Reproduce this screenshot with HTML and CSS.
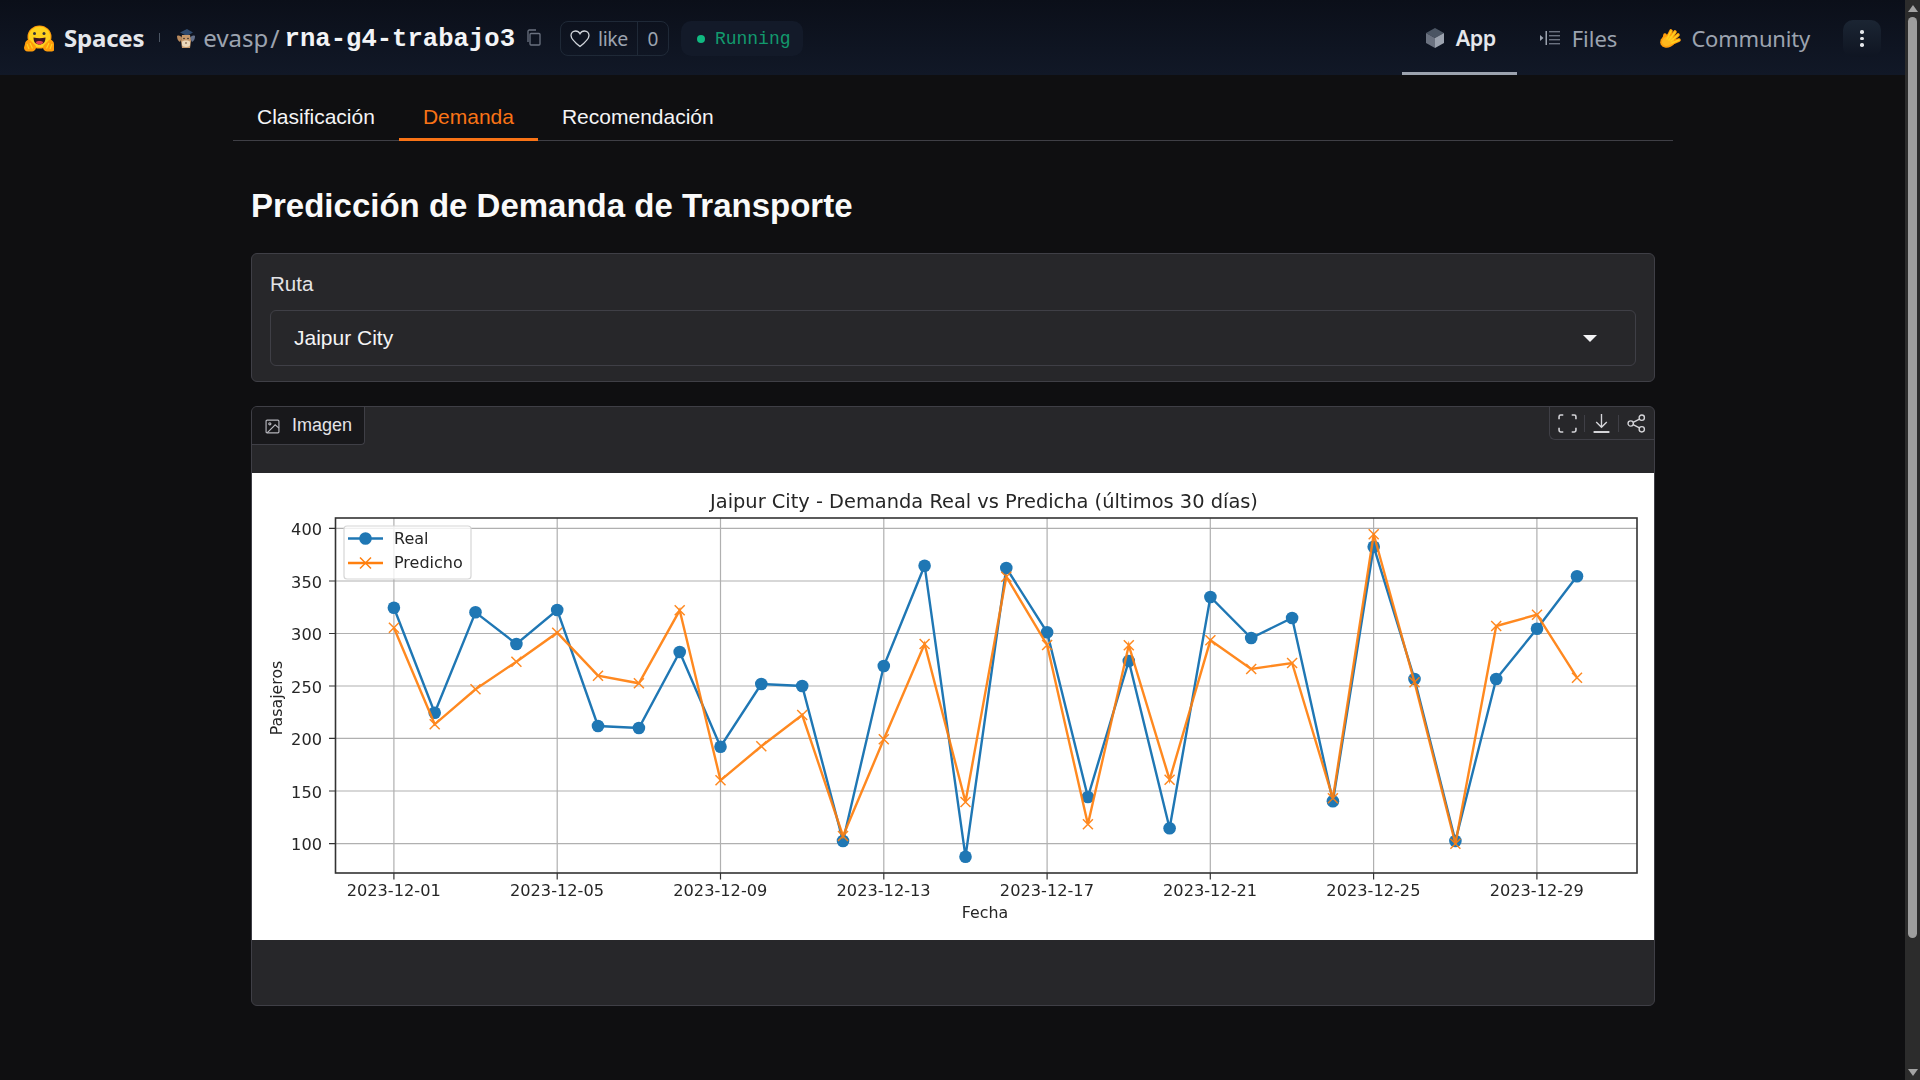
FILE: index.html
```html
<!DOCTYPE html>
<html lang="es">
<head>
    <meta charset="UTF-8">
    <title>rna-g4-trabajo3</title>
    <link rel="stylesheet" href="styles.css">
</head>
<body>
    <div class="page">
        <div class="main">
            <header class="hub-header">
                <svg class="hf-logo" viewBox="0 0 30 27">
                    <ellipse cx="15.500" cy="12" rx="12" ry="11.500" fill="#ff9d0b"/>
                    <ellipse cx="15.500" cy="12" rx="10.800" ry="10.500" fill="#ffd21e"/>
                    <circle cx="10.500" cy="8.500" r="1.500" fill="#32343d"/>
                    <circle cx="20" cy="8.500" r="1.500" fill="#32343d"/>
                    <path d="M9.500 12.500c4 1 8 1 12 0 0 5-2.500 7-6 7s-6-2-6-7z" fill="#3a1420"/>
                    <path d="M11.500 17c2-1.500 6-1.500 8 0-1 1.800-2.500 2.500-4 2.500s-3-.7-4-2.500z" fill="#e8434f"/>
                    <path d="M1 19c0-3 3-5 5-4l5 5c2 2 1 6-3 6.500H4c-3 0-4-2-4-4z" fill="#ff9d0b"/>
                    <path d="M30 19c0-3-3-5-5-4l-5 5c-2 2-1 6 3 6.500h4c3 0 4-2 4-4z" fill="#ff9d0b"/>
                    <path d="M3 19l2 5M6 18l2.500 5.500M28 19l-2 5M25 18l-2.500 5.500" stroke="#ffd21e" stroke-width="1.200"/>
                </svg>
                <span class="spaces-name">Spaces</span>
                <span class="divider"></span>
                <svg class="avatar" viewBox="0 0 20 20">
                    <path d="M4 4.500L11 1l6 3.500L11 8z" fill="#2f4a6d"/>
                    <path d="M1 8c2-1 4 0 5 2L4 14C2 13 1 11 1 8z" fill="#b98a5e"/>
                    <path d="M19 8c-2-1-4 0-5 2l2 4c2-1 3-3 3-6z" fill="#64708a"/>
                    <path d="M6 7h8l1 6-1 7H6l-1-7z" fill="#c79a6c"/>
                    <path d="M6 14c0-2 8-2 8 0v3c0 2.500-8 2.500-8 0z" fill="#ecd8bb"/>
                    <circle cx="8" cy="10.500" r=".8" fill="#2a2a2a"/>
                    <circle cx="12" cy="10.500" r=".8" fill="#2a2a2a"/>
                    <path d="M9 15h2" stroke="#6a4a33" stroke-width="1"/>
                </svg>
                <span class="owner">evasp</span>
                <span class="slash">/</span>
                <span class="repo-name">rna-g4-trabajo3</span>
                <svg class="copy-icon" viewBox="0 0 17 17" fill="none" stroke="#6b7280" stroke-width="1.300">
                    <rect x="5" y="4.500" width="10" height="11.500" rx="1"/>
                    <path d="M3 13V2.500C3 1.500 3.500 1 4.500 1H11"/>
                </svg>
                <div class="like-box">
                    <span class="like-btn">
                        <svg class="heart" viewBox="0 0 20 18" fill="none" stroke="#d1d5db" stroke-width="1.300">
                            <path d="M10 16.500C3 11 1 8.500 1 5.500 1 3 3 1 5.500 1 7.500 1 9 2 10 3.800 11 2 12.500 1 14.500 1 17 1 19 3 19 5.500c0 3-2 5.500-9 11z"/>
                        </svg>
                        like
                    </span>
                    <span class="like-count">0</span>
                </div>
                <div class="status-pill">
                    <span class="status-dot"></span>
                    Running
                </div>

                <nav class="hub-nav">
                    <a class="hub-tab active">
                        <svg class="tab-icon" viewBox="0 0 18 20">
                            <path d="M9 0l9 5-9 5-9-5z" fill="#4b5563"/>
                            <path d="M0 5l9 5v10l-9-5z" fill="#6b7280"/>
                            <path d="M18 5l-9 5v10l9-5z" fill="#9ca3af"/>
                        </svg>
                        App
                    </a>
                    <a class="hub-tab files-tab">
                        <svg class="files-icon" viewBox="0 0 20 14" fill="#6b7280">
                            <path d="M0 4l3.500 3L0 10z" fill="#9ca3af"/>
                            <rect x="5.500" y="0" width="1.500" height="14" fill="#9ca3af"/>
                            <rect x="9" y="0" width="11" height="1.400"/>
                            <rect x="9" y="4" width="11" height="1.400"/>
                            <rect x="9" y="8" width="11" height="1.400"/>
                            <rect x="9" y="12" width="11" height="1.400"/>
                        </svg>
                        Files
                    </a>
                    <a class="hub-tab community-tab">
                        <svg class="clap-icon" viewBox="0 0 23 20">
                            <g stroke="#ff9d0b" stroke-width="3.600" stroke-linecap="round" fill="none">
                                <path d="M8 11l4-8M10 12l6-8M12 13l7-6M13 15l7-3M5 12l1-5"/>
                            </g>
                            <ellipse cx="9" cy="13" rx="8" ry="6.300" fill="#ff9d0b" transform="rotate(-25 9 13)"/>
                            <ellipse cx="9" cy="13" rx="6.300" ry="4.800" fill="#ffb81e" transform="rotate(-25 9 13)"/>
                            <g stroke="#ffd21e" stroke-width="1.600" stroke-linecap="round" fill="none">
                                <path d="M8 11l4-8M10 12l6-8M12 13l7-6M13 15l7-3"/>
                            </g>
                        </svg>
                        Community
                    </a>
                    <span class="menu-btn">
                        <i></i><i></i><i></i>
                    </span>
                </nav>
            </header>

            <div class="app-wrap">
                <div class="tabs">
                    <button class="tab">Clasificación</button>
                    <button class="tab selected">Demanda</button>
                    <button class="tab">Recomendación</button>
                </div>

                <div class="tab-content">
                    <h1 class="page-title">Predicción de Demanda de Transporte</h1>

                    <div class="block dropdown-block">
                        <span class="field-label">Ruta</span>
                        <div class="select-box">
                            <span>Jaipur City</span>
                            <span class="caret"></span>
                        </div>
                    </div>

                    <div class="block image-block">
                        <div class="image-top">
                            <div class="image-label">
                                <svg class="image-icon" viewBox="0 0 14 14" fill="none" stroke="#b4b4bb" stroke-width="1.100">
                                    <rect x="1" y="1" width="12" height="12" rx="1"/>
                                    <circle cx="4.500" cy="4.500" r="1"/>
                                    <path d="M13 8.500L9.500 5.500 2 13"/>
                                </svg>
                                Imagen
                            </div>
                            <div class="image-tools">
                                <svg class="tool" viewBox="0 0 18 18" fill="none" stroke="#d4d4d8" stroke-width="1.500">
                                    <path d="M1 5V2.500C1 1.500 1.500 1 2.500 1H5M13 1h2.500c1 0 1.500.5 1.500 1.500V5M17 13v2.500c0 1-.5 1.500-1.500 1.500H13M5 17H2.500C1.500 17 1 16.500 1 15.500V13"/>
                                </svg>
                                <span class="tool-sep"></span>
                                <svg class="tool" viewBox="0 0 18 18" fill="none" stroke="#d4d4d8" stroke-width="1.300">
                                    <path d="M9 0v12M4 7.500l5 5 5-5"/>
                                    <path d="M1.500 17h15" stroke-width="1.800"/>
                                </svg>
                                <span class="tool-sep"></span>
                                <svg class="tool share" viewBox="0 0 18 18" fill="none" stroke="#d4d4d8" stroke-width="1.300">
                                    <circle cx="3.500" cy="9" r="2.500"/>
                                    <circle cx="14" cy="3.500" r="2.500"/>
                                    <circle cx="14" cy="14.500" r="2.500"/>
                                    <path d="M5.800 8l6-3.200M5.800 10l6 3.200"/>
                                </svg>
                            </div>
                        </div>

                        <svg class="chart" viewBox="252 473 1402 467">
                            <defs>
                                <marker id="dot" markerUnits="userSpaceOnUse" markerWidth="14" markerHeight="14" refX="7" refY="7">
                                    <circle cx="7" cy="7" r="6.300" fill="#1f77b4"/>
                                </marker>
                                <marker id="cross" markerUnits="userSpaceOnUse" markerWidth="14" markerHeight="14" refX="7" refY="7">
                                    <path d="M2 2l10 10M12 2L2 12" stroke="#ff7f0e" stroke-width="1.500" fill="none"/>
                                </marker>
                            </defs>

                            <g class="grid">
                                <path d="M393.900 518V873M557.200 518V873M720.500 518V873M883.800 518V873M1047.100 518V873M1210.300 518V873M1373.600 518V873M1536.900 518V873"/>
                                <path d="M336 528.300H1637M336 581H1637M336 633.500H1637M336 686H1637M336 738.300H1637M336 791H1637M336 843.700H1637"/>
                            </g>

                            <polyline class="series-real" points="393.900,607.700 434.700,712.700 475.500,612.300 516.400,644 557.200,610 598,726 638.900,728 679.700,652 720.500,746.700 761.300,684 802.200,686 843,841 883.800,666 924.600,565.700 965.500,856.700 1006.300,568 1047.100,632.300 1087.900,797 1128.800,661 1169.600,828.300 1210.400,597 1251.200,638 1292.100,618 1332.900,801.300 1373.700,546.700 1414.500,679 1455.400,841 1496.200,679 1537,628.700 1577,576.300"/>
                            <polyline class="series-pred" points="393.900,627.700 434.700,724.300 475.500,689.300 516.400,661.700 557.200,632.700 598,675.700 638.900,683.300 679.700,610.300 720.500,780.300 761.300,746.300 802.200,715 843,836 883.800,739.300 924.600,644 965.500,802 1006.300,576.700 1047.100,645 1087.900,824.300 1128.800,645.300 1169.600,779.700 1210.400,640.300 1251.200,669 1292.100,663 1332.900,798.300 1373.700,534.300 1414.500,682.300 1455.400,843.700 1496.200,626 1537,614.700 1577,677.700"/>

                            <rect class="axes" x="335.500" y="518" width="1301.500" height="355"/>
                            <path class="ticks" d="M329 528.300h6.500M329 581h6.500M329 633.500h6.500M329 686h6.500M329 738.300h6.500M329 791h6.500M329 843.700h6.500M393.900 873v6.500M557.200 873v6.500M720.500 873v6.500M883.800 873v6.500M1047.100 873v6.500M1210.300 873v6.500M1373.600 873v6.500M1536.900 873v6.500"/>

                            <text class="chart-title" x="984" y="508">Jaipur City - Demanda Real vs Predicha (últimos 30 días)</text>

                            <g class="y-labels">
                                <text x="322" y="535">400</text>
                                <text x="322" y="588">350</text>
                                <text x="322" y="640">300</text>
                                <text x="322" y="693">250</text>
                                <text x="322" y="745">200</text>
                                <text x="322" y="798">150</text>
                                <text x="322" y="850">100</text>
                            </g>
                            <g class="x-labels">
                                <text x="393.700" y="896">2023-12-01</text>
                                <text x="557" y="896">2023-12-05</text>
                                <text x="720.300" y="896">2023-12-09</text>
                                <text x="883.600" y="896">2023-12-13</text>
                                <text x="1046.900" y="896">2023-12-17</text>
                                <text x="1210.100" y="896">2023-12-21</text>
                                <text x="1373.400" y="896">2023-12-25</text>
                                <text x="1536.700" y="896">2023-12-29</text>
                            </g>
                            <text class="axis-label" x="985" y="918">Fecha</text>
                            <text class="axis-label" transform="translate(282 698) rotate(-90)">Pasajeros</text>

                            <rect class="legend" x="344" y="526" width="127" height="53" rx="3"/>
                            <path class="legend-real" d="M348 538.500h35"/>
                            <circle cx="365.500" cy="538.500" r="6.300" fill="#1f77b4"/>
                            <path class="legend-pred" d="M348 563h35"/>
                            <path class="legend-pred thin" d="M360 557.500l11 11M371 557.500l-11 11"/>
                            <text class="legend-text" x="394" y="544">Real</text>
                            <text class="legend-text" x="394" y="568">Predicho</text>
                        </svg>
                        <div class="image-bottom"></div>
                    </div>
                </div>
            </div>
        </div>

        <!-- barra de rolagem desenhada -->
        <div class="scrollbar">
            <span class="arrow-up"></span>
            <span class="thumb"></span>
            <span class="arrow-down"></span>
        </div>
    </div>
</body>
</html>
```

FILE: styles.css
```css
* {
    box-sizing: border-box;
}

html, body {
    margin: 0;
    height: 100%;
    overflow: hidden;
}

body {
    background: #0f0f11;
    font-family: 'Liberation Sans', Arial, sans-serif;
    color: #f4f4f5;
}

.page {
    display: flex;
    height: 1080px;
}

.main {
    flex: 1;
    min-width: 0;
}

/* Header */
.hub-header {
    display: flex;
    align-items: center;
    height: 75px;
    padding: 0 24px;
    background: linear-gradient(to bottom, #0b0f19, #111827);
    font-family: 'Noto Sans', sans-serif;
    color: #9ca3af;
    font-size: 24px;
}

.hf-logo {
    width: 30px;
    height: 27px;
    margin: 1px 10px 0 0;
}

.spaces-name {
    font-weight: 700;
    color: #e5e7eb;
    font-size: 24px;
    letter-spacing: -0.2px;
}

.divider {
    width: 1px;
    height: 9px;
    background: #4b5563;
    margin: 0 16px 0 15px;
}

.avatar {
    width: 20px;
    height: 20px;
    margin: 1px 7px 0 0;
}

.slash {
    margin: 0 5px 0 2px;
    font-size: 25px;
}

.repo-name {
    padding-top: 4px;
    font-family: 'Liberation Mono', monospace;
    font-weight: 700;
    font-size: 25.6px;
    color: #f3f4f6;
}

.copy-icon {
    width: 17px;
    height: 17px;
    margin-left: 10px;
}

.like-box {
    display: flex;
    align-items: center;
    height: 35px;
    margin: 2px 0 0 18px;
    border: 1px solid #1f2937;
    border-radius: 8px;
    font-size: 19.5px;
}

.like-btn {
    display: flex;
    align-items: center;
    gap: 8px;
    height: 100%;
    padding: 0 9px;
    border-right: 1px solid #1f2937;
    letter-spacing: -0.4px;
    color: #9ca3af;
}

.heart {
    width: 20px;
    height: 18px;
}

.like-count {
    width: 30px;
    text-align: center;
    font-size: 19px;
}

.status-pill {
    display: flex;
    align-items: center;
    gap: 10px;
    height: 35px;
    margin: 2px 0 0 12px;
    padding: 0 12px 0 16px;
    background: #131a29;
    border-radius: 10px;
    font-family: 'Liberation Mono', monospace;
    font-size: 18px;
    color: #12996d;
}

.status-dot {
    width: 8px;
    height: 8px;
    border-radius: 50%;
    background: #10b981;
}

.hub-nav {
    display: flex;
    align-items: center;
    margin-left: auto;
    height: 100%;
}

.hub-tab {
    display: flex;
    align-items: center;
    gap: 12px;
    height: 100%;
    padding: 3px 21px 0 24px;
    border-bottom: 3px solid transparent;
    font-size: 22px;
}

.hub-tab.active {
    border-bottom-color: #9ca3af;
    color: #e5e7eb;
    font-size: 21.5px;
    font-weight: 600;
    letter-spacing: -0.5px;
}

.files-tab {
    padding-left: 23px;
    padding-right: 18px;
}

.community-tab {
    gap: 9px;
    letter-spacing: -0.2px;
}

.tab-icon {
    width: 18px;
    height: 20px;
}

.files-icon {
    width: 20px;
    height: 14px;
}

.clap-icon {
    width: 23px;
    height: 20px;
}

.menu-btn {
    display: flex;
    flex-direction: column;
    align-items: center;
    justify-content: center;
    gap: 3px;
    width: 38px;
    height: 37px;
    margin: 2px 0 0 12px;
    background: linear-gradient(to bottom, #1b2533, #0f1522);
    border-radius: 10px;
}

.menu-btn i {
    width: 3.5px;
    height: 3.5px;
    border-radius: 50%;
    background: #e5e7eb;
}

/* Gradio */
.app-wrap {
    width: 1440px;
    margin-left: 233px;
}

.tabs {
    display: flex;
    height: 66px;
    border-bottom: 1px solid #3f3f46;
}

.tab {
    height: 66px;
    padding: 20px 24px 0;
    border: 0;
    border-bottom: 3px solid transparent;
    background: none;
    font-family: inherit;
    font-size: 21px;
    color: #f4f4f5;
}

.tab.selected {
    border-bottom-color: #f97316;
    color: #f97316;
}

.tab-content {
    padding: 0 18px;
}

.page-title {
    margin: 0;
    padding-top: 44px;
    height: 112px;
    font-size: 33px;
    line-height: 42px;
    font-weight: 700;
    color: #fafafa;
}

.block {
    background: #27272a;
    border: 1px solid #3f3f46;
    border-radius: 6px;
}

.dropdown-block {
    height: 129px;
    padding: 17px 18px 0;
}

.field-label {
    display: block;
    height: 39px;
    font-size: 20.5px;
    line-height: 26px;
    color: #e4e4e7;
}

.select-box {
    display: flex;
    align-items: center;
    justify-content: space-between;
    height: 56px;
    padding: 0 38px 0 23px;
    border: 1px solid #3f3f46;
    border-radius: 6px;
    font-size: 21px;
}

.caret {
    width: 0;
    height: 0;
    border-left: 7px solid transparent;
    border-right: 7px solid transparent;
    border-top: 7px solid #f4f4f5;
}

.image-block {
    margin-top: 24px;
    height: 600px;
    overflow: hidden;
}

.image-top {
    display: flex;
    justify-content: space-between;
    height: 66px;
}

.image-label {
    display: flex;
    align-items: center;
    gap: 12px;
    width: 113px;
    height: 38px;
    padding-left: 13px;
    background: #18181b;
    border-right: 1px solid #3f3f46;
    border-bottom: 1px solid #3f3f46;
    border-bottom-right-radius: 4px;
    font-size: 18px;
    color: #e4e4e7;
}

.image-icon {
    width: 15px;
    height: 15px;
    margin-top: 2px;
}

.image-tools {
    display: flex;
    align-items: center;
    gap: 7px;
    height: 33px;
    padding: 0 8px;
    border-left: 1px solid #3f3f46;
    border-bottom: 1px solid #3f3f46;
    border-bottom-left-radius: 6px;
}

.tool {
    width: 19px;
    height: 19px;
}

.tool.share {
    margin-left: 1px;
}

.tool-sep {
    width: 1px;
    height: 17px;
    background: #3f3f46;
}

.chart {
    display: block;
    width: 1402px;
    height: 467px;
    background: #fff;
    font-family: 'DejaVu Sans', sans-serif;
    filter: blur(0.4px);
}

.grid path {
    fill: none;
    stroke: #b0b0b0;
    stroke-width: 1.2;
}

.axes {
    fill: none;
    stroke: #333;
    stroke-width: 1.6;
}

.ticks {
    fill: none;
    stroke: #333;
    stroke-width: 1.2;
}

.series-real {
    fill: none;
    stroke: #1f77b4;
    stroke-width: 2.4;
    marker-start: url(#dot);
    marker-mid: url(#dot);
    marker-end: url(#dot);
}

.series-pred {
    fill: none;
    stroke: #ff7f0e;
    stroke-width: 2.4;
    opacity: 0.92;
    marker-start: url(#cross);
    marker-mid: url(#cross);
    marker-end: url(#cross);
}

.chart-title {
    font-size: 19.4px;
    fill: #262626;
    text-anchor: middle;
}

.y-labels text {
    font-size: 16.2px;
    fill: #262626;
    text-anchor: end;
}

.x-labels text {
    font-size: 16.2px;
    fill: #262626;
    text-anchor: middle;
}

.axis-label {
    font-size: 15.8px;
    fill: #262626;
    text-anchor: middle;
}

.legend {
    fill: rgba(255, 255, 255, 0.8);
    stroke: #d6d6d6;
    stroke-width: 1.2;
}

.legend-real {
    stroke: #1f77b4;
    stroke-width: 2.4;
}

.legend-pred {
    fill: none;
    stroke: #ff7f0e;
    stroke-width: 2.4;
}

.legend-pred.thin {
    stroke-width: 1.5;
}

.legend-text {
    font-size: 16px;
    fill: #262626;
}

.image-bottom {
    height: 65px;
}

/* Scrollbar */
.scrollbar {
    display: flex;
    flex-direction: column;
    align-items: center;
    width: 15px;
    height: 1080px;
    padding-top: 5px;
    background: #2c2c2c;
}

.arrow-up {
    width: 0;
    height: 0;
    border-left: 5px solid transparent;
    border-right: 5px solid transparent;
    border-bottom: 7px solid #a3a3a3;
}

.thumb {
    width: 9px;
    height: 921px;
    margin-top: 5px;
    background: #9e9e9e;
    border-radius: 5px;
}

.arrow-down {
    width: 0;
    height: 0;
    margin-top: 131px;
    border-left: 5px solid transparent;
    border-right: 5px solid transparent;
    border-top: 7px solid #a3a3a3;
}
```
